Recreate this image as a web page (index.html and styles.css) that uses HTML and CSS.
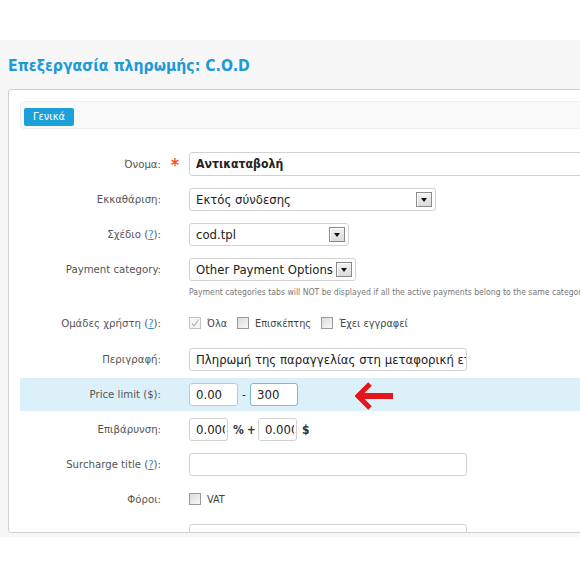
FILE: index.html
```html
<!DOCTYPE html>
<html lang="el">
<head>
<meta charset="utf-8">
<title>Επεξεργασία πληρωμής</title>
<link rel="stylesheet" href="styles.css">
</head>
<body>
<div class="top"></div>
<div class="page">
  <h1 class="title">Επεξεργασία πληρωμής: C.O.D</h1>
  <div class="panel">
    <div class="tabs"><span class="tab">Γενικά</span></div>
    <div class="form">
      <div class="row">
        <div class="label">Όνομα:</div>
        <div class="mark">*</div>
        <div class="field"><input class="input wide bold" type="text" value="Αντικαταβολή"></div>
      </div>
      <div class="row">
        <div class="label">Εκκαθάριση:</div>
        <div class="mark"></div>
        <div class="field"><div class="select w247"><span class="stext">Εκτός σύνδεσης</span><span class="arrow"></span></div></div>
      </div>
      <div class="row">
        <div class="label">Σχέδιο (<span class="help">?</span>):</div>
        <div class="mark"></div>
        <div class="field"><div class="select w160"><span class="stext">cod.tpl</span><span class="arrow"></span></div></div>
      </div>
      <div class="row top-aligned">
        <div class="label">Payment category:</div>
        <div class="mark"></div>
        <div class="field">
          <div class="select w167"><span class="stext">Other Payment Options</span><span class="arrow"></span></div>
          <div class="hint">Payment categories tabs will NOT be displayed if all the active payments belong to the same category.</div>
        </div>
      </div>
      <div class="row checks">
        <div class="label">Ομάδες χρήστη (<span class="help">?</span>):</div>
        <div class="mark"></div>
        <div class="field">
          <label class="cb"><span class="box checked"><svg viewBox="0 0 12 12" width="12" height="12"><path d="M3 6.5 L5.2 9 L9.5 2.5" fill="none" stroke="#b9b9b9" stroke-width="1.3"/></svg></span><span class="cbt">Όλα</span></label>
          <label class="cb"><span class="box"></span><span class="cbt">Επισκέπτης</span></label>
          <label class="cb"><span class="box"></span><span class="cbt">Έχει εγγραφεί</span></label>
        </div>
      </div>
      <div class="row">
        <div class="label">Περιγραφή:</div>
        <div class="mark"></div>
        <div class="field"><input class="input w278" type="text" value="Πληρωμή της παραγγελίας στη μεταφορική εταιρεία"></div>
      </div>
      <div class="row hl">
        <div class="label">Price limit ($):</div>
        <div class="mark"></div>
        <div class="field">
          <input class="input w49 blue" type="text" value="0.00">
          <span class="sep">-</span>
          <input class="input w48 blue2" type="text" value="300">
        </div>
        <svg class="red-arrow" viewBox="0 0 40 28" width="40" height="28"><path d="M15 2 L3 14 L15 26" fill="none" stroke="#e5141b" stroke-width="5"/><path d="M5 14 H38" stroke="#e5141b" stroke-width="6"/></svg>
      </div>
      <div class="row">
        <div class="label">Επιβάρυνση:</div>
        <div class="mark"></div>
        <div class="field">
          <input class="input w39" type="text" value="0.0000">
          <span class="unit">%</span><span class="plus">+</span>
          <input class="input w39" type="text" value="0.0000">
          <span class="unit">$</span>
        </div>
      </div>
      <div class="row">
        <div class="label">Surcharge title (<span class="help">?</span>):</div>
        <div class="mark"></div>
        <div class="field"><input class="input w278" type="text" value=""></div>
      </div>
      <div class="row checks">
        <div class="label">Φόροι:</div>
        <div class="mark"></div>
        <div class="field">
          <label class="cb"><span class="box"></span><span class="cbt">VAT</span></label>
        </div>
      </div>
      <div class="row">
        <div class="label"></div>
        <div class="mark"></div>
        <div class="field"><input class="input w278" type="text" value=""></div>
      </div>
    </div>
  </div>
</div>
</body>
</html>
```
FILE: styles.css
```css
html, body {
  margin: 0;
  padding: 0;
  background: #ffffff;
  overflow: hidden;
}
body {
  width: 580px;
  height: 580px;
  font-family: "DejaVu Sans Condensed", "DejaVu Sans", sans-serif;
}
.top {
  height: 40px;
}
.page {
  background: #f7f7f7;
  padding: 0 0 4px 8px;
  overflow: hidden;
}
.title {
  margin: 0;
  padding-top: 16px;
  height: 20px;
  line-height: 20px;
  font-size: 15.7px;
  font-weight: bold;
  color: #1e9ad6;
}
.panel {
  margin-top: 13px;
  width: 700px;
  height: 431px;
  background: #ffffff;
  border: 1px solid #cfcfcf;
  border-radius: 3px;
  padding: 11px 0 0 11px;
  overflow: hidden;
}
.tabs {
  height: 23px;
  border: 1px solid #eeeeee;
  background: #fafafa;
  border-radius: 4px;
  padding: 3px 0 0 3px;
}
.tab {
  display: inline-block;
  width: 50px;
  height: 18px;
  line-height: 18px;
  text-align: center;
  background: #1ba0da;
  color: #ffffff;
  font-size: 11px;
  border-radius: 2px;
}
.form {
  margin-top: 18px;
}
.row {
  display: grid;
  grid-template-columns: 141px 28px 1fr;
  align-items: center;
  padding: 5px 0;
  margin-bottom: 2px;
  position: relative;
}
.row.top-aligned {
  align-items: start;
}
.row.top-aligned .label {
  line-height: 23px;
}
.row.checks {
  padding: 8px 0 10px;
}
.row.hl {
  background: #dbf0f8;
}
.label {
  text-align: right;
  font-size: 11.3px;
  color: #555555;
  white-space: nowrap;
}
.help {
  color: #1e8fcb;
  text-decoration: underline;
}
.mark {
  text-align: center;
  color: #f2541b;
  font-size: 17px;
  font-weight: bold;
  line-height: 14px;
  height: 14px;
  padding-top: 2px;
}
.field {
  display: flex;
  align-items: center;
  flex-wrap: wrap;
  white-space: nowrap;
}
.input {
  height: 23px;
  box-sizing: border-box;
  border: 1px solid #d2d2d2;
  border-radius: 3px;
  background: #ffffff;
  padding: 0 0 0 6px;
  margin: 0;
  font-family: "DejaVu Sans Condensed", "DejaVu Sans", sans-serif;
  font-size: 13px;
  color: #222222;
  outline: none;
}
.input.wide {
  width: 420px;
  height: 24px;
}
.input.bold {
  font-weight: bold;
  font-size: 12.2px;
}
.w278 { width: 278px; }
.w49 { width: 49px; }
.w48 { width: 48px; }
.w39 { width: 39px; padding-right: 2px; }
.blue { border-color: #a5d1e6; }
.blue2 { border-color: #7fb9d6; }
.sep {
  width: 12px;
  text-align: center;
  font-size: 12px;
  color: #333333;
}
.unit {
  font-size: 12px;
  font-weight: bold;
  color: #333333;
  margin: 0 3px 0 5px;
}
.plus {
  font-size: 12px;
  font-weight: bold;
  color: #333333;
  margin-right: 2px;
}
.select {
  height: 23px;
  box-sizing: border-box;
  border: 1px solid #d2d2d2;
  border-radius: 3px;
  background: #ffffff;
  display: flex;
  align-items: center;
  justify-content: space-between;
  padding: 0 3px 0 6px;
  font-size: 13px;
  color: #222222;
}
.w247 { width: 247px; }
.w160 { width: 160px; }
.w167 { width: 167px; }
.arrow {
  width: 16px;
  height: 15px;
  flex: none;
  box-sizing: border-box;
  border: 1px solid #8a8a8a;
  background: linear-gradient(#f2f2f2, #dcdcdc);
  position: relative;
  box-shadow: inset 1px 1px 0 #ffffff;
}
.arrow::after {
  content: "";
  position: absolute;
  left: 4px;
  top: 5px;
  border-left: 3.5px solid transparent;
  border-right: 3.5px solid transparent;
  border-top: 4px solid #111111;
}
.hint {
  flex-basis: 100%;
  margin: 5px 0 2px;
  line-height: 12px;
  font-size: 8.6px;
  color: #777777;
}
.cb {
  display: inline-flex;
  align-items: center;
  margin-right: 10px;
}
.box {
  width: 12px;
  height: 12px;
  box-sizing: border-box;
  border: 1px solid #9a9a9a;
  background: linear-gradient(135deg, #dcdcdc, #f8f8f8);
  display: inline-block;
  position: relative;
}
.box.checked {
  border-color: #c4c4c4;
  background: #f4f4f4;
}
.box svg {
  position: absolute;
  left: -1px;
  top: -1px;
}
.cbt {
  margin-left: 6px;
  font-size: 10.8px;
  color: #444444;
}
.red-arrow {
  position: absolute;
  left: 335px;
  top: 4px;
}
```
